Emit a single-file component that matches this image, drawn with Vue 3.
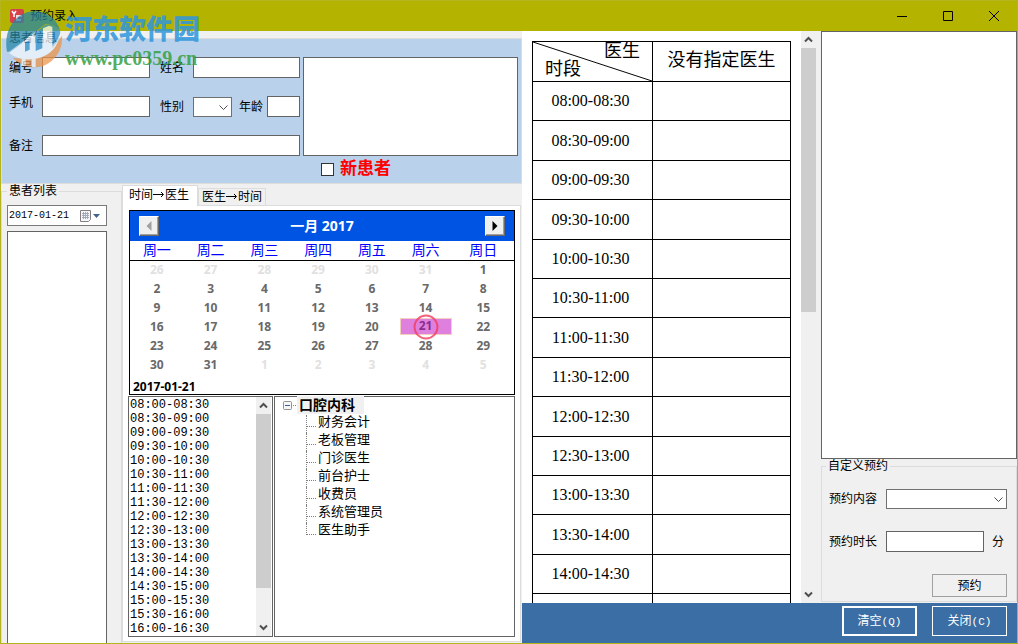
<script setup>
import { ref } from 'vue'

const weekdays = ['周一', '周二', '周三', '周四', '周五', '周六', '周日']
const pad = (n) => String(n).padStart(2, '0')

const weeks = Array.from({ length: 6 }, (_, w) =>
  Array.from({ length: 7 }, (_, d) => {
    const n = w * 7 + d - 5
    if (n < 1) return { day: n + 31, outside: true }
    if (n > 31) return { day: n - 31, outside: true }
    return { day: n, outside: false, selected: n === 21 }
  })
)

const slots = Array.from({ length: 17 }, (_, i) => {
  const start = 480 + i * 30
  const end = start + 30
  return `${pad(Math.floor(start / 60))}:${pad(start % 60)}-${pad(Math.floor(end / 60))}:${pad(end % 60)}`
})
const scheduleSlots = [...slots.slice(0, 13), '']

const staff = ['财务会计', '老板管理', '门诊医生', '前台护士', '收费员', '系统管理员', '医生助手']
const tab = ref('time')
const date = ref('2017-01-21')
</script>

<template>
  <div class="window">
    <header class="titlebar">
      <svg class="app-icon" width="14" height="14" viewBox="0 0 14 14">
        <rect width="14" height="14" rx="2" fill="#d8404a" />
        <path d="M2 2l2 3 2-3M4 5v3" stroke="#fff" stroke-width="1.5" fill="none" />
        <path d="M6 6h6v2H8v2h3v2H6z" fill="#f6d9dc" />
      </svg>
      <h1>预约录入</h1>
      <div class="win-buttons">
        <button aria-label="最小化"><svg width="12" height="12"><path d="M1 6.500h10" /></svg></button>
        <button aria-label="最大化"><svg width="12" height="12"><path d="M1.500 1.500h9v9h-9z" /></svg></button>
        <button aria-label="关闭"><svg width="12" height="12"><path d="M1 1l10 10M11 1L1 11" /></svg></button>
      </div>
    </header>

    <div class="watermark" aria-hidden="true">
      <svg class="mark-logo" width="58" height="60" viewBox="0 0 174 180">
        <path d="M6 128C-4 76 18 26 66 10c44-12 86 10 100 56-14-16-30-22-46-20L72 84 12 128z" fill="#2387a8" />
        <path d="M14 130l54-40 52-42c20-4 36 4 46 20-4 30-40 62-80 72-28 8-54 4-72-10z" fill="#2f92cc" />
        <path d="M171 80c4 40-20 78-58 92-32 8-66-2-90-26 54 10 112-10 148-66z" fill="#ee9447" />
        <path d="M12 132c16-14 34-22 48-38l14-14 18-2v26c10-4 18-12 22-20V58l18-8 10 4v62c8-8 16-18 20-32-6 38-36 60-74 66-30 4-56-2-76-18z" fill="#f6fbff" />
        <path d="M60 100l14-6v28l-14 6zM92 104l20-16v30l-20 8z" fill="#2f92cc" />
        <path d="M56 148v22M86 148v26" stroke="#f8f2ea" stroke-width="12" />
      </svg>
      <div class="mark-text">
        <strong class="mark-name">河东软件园</strong>
        <strong class="mark-url">www.pc0359.cn</strong>
      </div>
    </div>

    <main class="body">
      <section class="left">
        <fieldset class="group patient">
          <legend>患者信息</legend>
          <div class="patient-layout">
            <div class="fields">
              <div class="field-row">
                <label for="no">编号</label><input id="no" type="text" />
                <label class="second" for="name">姓名</label><input id="name" type="text" />
              </div>
              <div class="field-row">
                <label class="raised" for="phone">手机</label><input id="phone" type="text" />
                <label class="second" for="sex">性别</label>
                <div class="sex-age">
                  <div class="combo sex">
                    <select id="sex"><option></option><option>男</option><option>女</option></select>
                    <svg width="9" height="6"><path d="M.5 .5l4 4 4-4" /></svg>
                  </div>
                  <label for="age">年龄</label><input id="age" type="text" />
                </div>
              </div>
              <div class="field-row memo">
                <label for="memo">备注</label><input id="memo" type="text" />
              </div>
            </div>
            <div class="notes">
              <textarea aria-label="患者说明"></textarea>
              <label class="new-patient"><input type="checkbox" />新患者</label>
            </div>
          </div>
        </fieldset>

        <div class="lower">
          <fieldset class="group patients">
            <legend>患者列表</legend>
            <div class="datepicker">
              <input v-model="date" type="text" aria-label="日期" />
              <button aria-label="选择日期">
                <svg width="22" height="14" viewBox="0 0 22 14">
                  <path d="M1.500 1.500h10v9l-2 2h-8z" fill="#f4f6fa" stroke="#85807f" />
                  <path d="M3 4.500h7M3 6.500h7M3 8.500h7M4.500 3v7M6.500 3v7M8.500 3v7" stroke="#a3aab8" fill="none" />
                  <path d="M14 5h7l-3.500 4z" fill="#44618f" />
                </svg>
              </button>
            </div>
            <div class="patient-list" role="listbox" aria-label="患者列表"></div>
          </fieldset>

          <div class="tabs">
            <div class="tab-bar" role="tablist">
              <button role="tab" class="tab" :class="{ active: tab === 'time' }" @click="tab = 'time'">时间<svg width="12" height="12" viewBox="0 0 12 12"><path d="M0 5.500h10M8 3l2.500 2.500L8 8" /></svg>医生</button>
              <button role="tab" class="tab" :class="{ active: tab === 'doctor' }" @click="tab = 'doctor'">医生<svg width="12" height="12" viewBox="0 0 12 12"><path d="M0 5.500h10M8 3l2.500 2.500L8 8" /></svg>时间</button>
            </div>
            <div class="tab-panel">
              <div class="calendar">
                <div class="cal-head">
                  <button aria-label="上个月"><svg width="6" height="10"><path d="M5.500 0v10L.5 5z" fill="#a0a0a0" /></svg></button>
                  <span>一月 2017</span>
                  <button aria-label="下个月"><svg width="6" height="10"><path d="M.5 0v10l5-5z" fill="#000" /></svg></button>
                </div>
                <table class="days">
                  <colgroup><col v-for="d in 6" :key="d" class="day-col" /><col /></colgroup>
                  <thead>
                    <tr><th v-for="d in weekdays" :key="d">{{ d }}</th></tr>
                  </thead>
                  <tbody>
                    <tr v-for="(week, i) in weeks" :key="i">
                      <td v-for="(c, j) in week" :key="j" :class="{ outside: c.outside, selected: c.selected }">
                        <span>{{ c.day }}</span>
                        <svg v-if="c.selected" class="ring" width="26" height="26"><circle cx="13" cy="13" r="11.500" /></svg>
                      </td>
                    </tr>
                  </tbody>
                </table>
                <div class="cal-date">{{ date }}</div>
              </div>

              <div class="pickers">
                <div class="slot-box">
                  <ul class="slots">
                    <li v-for="s in slots" :key="s">{{ s }}</li>
                  </ul>
                  <div class="scrollbar slot-scroll">
                    <svg width="9" height="7"><path d="M1 5.500l3.500-3.500L8 5.500" /></svg>
                    <div class="track"><div class="thumb"></div></div>
                    <svg width="9" height="7"><path d="M1 1.500l3.500 3.500L8 1.500" /></svg>
                  </div>
                </div>
                <div class="tree">
                  <div class="root">
                    <svg width="14" height="9" viewBox="0 0 14 9">
                      <rect x=".5" y=".5" width="8" height="8" rx="1" fill="#f6f6f6" stroke="#919191" />
                      <path d="M2 4.500h5" stroke="#3c5a9a" />
                      <path d="M10 4.500h1M12 4.500h1" stroke="#808080" />
                    </svg>
                    <strong>口腔内科</strong>
                  </div>
                  <ul>
                    <li v-for="s in staff" :key="s">{{ s }}</li>
                  </ul>
                </div>
              </div>
            </div>
          </div>
        </div>
      </section>

      <section class="right">
        <div class="right-main">
          <div class="schedule">
            <div class="sheet">
              <table>
                <colgroup><col class="time-col" /><col /></colgroup>
                <thead>
                  <tr>
                    <th class="corner">
                      <svg preserveAspectRatio="none" viewBox="0 0 120 40"><path d="M0 0L120 40" /></svg>
                      <div class="corner-doctor">医生</div>
                      <div class="corner-time">时段</div>
                    </th>
                    <th>没有指定医生</th>
                  </tr>
                </thead>
                <tbody>
                  <tr v-for="s in scheduleSlots" :key="s"><td>{{ s }}</td><td></td></tr>
                </tbody>
              </table>
            </div>
            <div class="scrollbar sheet-scroll">
              <svg width="9" height="7"><path d="M1 5.500l3.500-3.500L8 5.500" /></svg>
              <div class="track"><div class="thumb"></div></div>
              <svg width="9" height="7"><path d="M1 1.500l3.500 3.500L8 1.500" /></svg>
            </div>
          </div>

          <aside class="side">
            <div class="booking-list" role="listbox" aria-label="预约列表"></div>
            <fieldset class="group custom">
              <legend>自定义预约</legend>
              <div class="custom-row">
                <label for="content">预约内容</label>
                <div class="combo content">
                  <select id="content"><option></option></select>
                  <svg width="9" height="6"><path d="M.5 .5l4 4 4-4" /></svg>
                </div>
              </div>
              <div class="custom-row">
                <label for="length">预约时长</label>
                <input id="length" type="text" /><span class="unit">分</span>
              </div>
              <button class="book">预约</button>
            </fieldset>
          </aside>
        </div>
        <footer>
          <button class="primary">清空<span>(Q)</span></button>
          <button>关闭<span>(C)</span></button>
        </footer>
      </section>
    </main>
  </div>
</template>

<style>
body {
  margin: 0;
}
</style>

<style scoped>
* {
  box-sizing: border-box;
}
.window {
  position: relative;
  display: flex;
  flex-direction: column;
  height: 100vh;
  overflow: hidden;
  border: 1px solid #b4b41e;
  background: #f0f0f0;
  color: #000;
  font: 12px/14px "Liberation Sans", "Noto Sans CJK SC", sans-serif;
}
button,
input,
select,
textarea {
  margin: 0;
  padding: 0;
  border-radius: 0;
  font: inherit;
  color: inherit;
}
ul {
  margin: 0;
  padding: 0;
  list-style: none;
}
svg {
  flex: none;
  display: block;
}

/* Title bar */
.titlebar {
  display: flex;
  align-items: center;
  flex: none;
  height: 30px;
  padding-left: 9px;
  background: #b4b400;
}
h1 {
  flex: 1;
  margin: 0 0 0 6px;
  font-size: 12px;
  font-weight: 400;
}
.win-buttons {
  display: flex;
}
.win-buttons button {
  display: flex;
  align-items: center;
  justify-content: center;
  width: 46px;
  height: 30px;
  border: 0;
  background: none;
}
.win-buttons path {
  fill: none;
  stroke: #000;
}

/* Watermark over the window's corner */
.watermark {
  position: absolute;
  top: 8px;
  left: 4px;
  z-index: 2;
  display: flex;
  gap: 2px;
  pointer-events: none;
  opacity: 0.85;
}
.mark-logo {
  opacity: 0.85;
}
.mark-text {
  display: flex;
  flex-direction: column;
}
.mark-name {
  font-size: 27px;
  font-weight: 900;
  line-height: 42px;
  color: #2f96dd;
}
.mark-url {
  font: 700 20px/14px "Liberation Serif", serif;
  color: #36a044;
}

/* Frame */
.body {
  display: grid;
  grid-template-columns: minmax(0, 521fr) minmax(0, 495fr);
  flex: 1;
  min-height: 0;
}
.left,
.right {
  display: flex;
  flex-direction: column;
  min-height: 0;
}
.group {
  min-width: 0;
  margin: 0;
  border: 1px solid #dcdcdc;
}
legend {
  padding: 0 2px;
  line-height: 14px;
}
.combo {
  position: relative;
  display: flex;
}
.combo select {
  width: 100%;
  height: 20px;
  border: 1px solid #707070;
  background: #fff;
  appearance: none;
}
.combo svg {
  position: absolute;
  top: 8px;
  right: 4px;
  pointer-events: none;
}
.combo path {
  fill: none;
  stroke: #505050;
}
input[type="text"],
textarea {
  min-width: 0;
  width: 100%;
  height: 21px;
  border: 1px solid #646464;
  background: #fff;
}

/* Patient details */
.patient {
  flex: none;
  padding: 12px 3px 4px 7px;
  background: #b9d1ea;
}
.patient legend {
  margin-left: -2px;
}
.patient-layout {
  display: grid;
  grid-template-columns: minmax(0, 291fr) minmax(0, 215fr);
  column-gap: 3px;
}
.fields {
  display: flex;
  flex-direction: column;
  gap: 18px;
}
.field-row {
  display: grid;
  grid-template-columns: 33px minmax(0, 108fr) 43px minmax(0, 107fr);
  align-items: center;
}
.field-row.memo {
  grid-template-columns: 33px minmax(0, 1fr);
}
.second {
  padding-left: 10px;
}
.raised {
  align-self: start;
}
.sex-age {
  display: flex;
  align-items: center;
}
.sex {
  flex: none;
  width: 39px;
  margin-right: 7px;
}
.sex-age label {
  flex: none;
  width: 28px;
}
.notes {
  display: flex;
  flex-direction: column;
}
.notes textarea {
  display: block;
  height: 99px;
  resize: none;
}
.new-patient {
  display: flex;
  align-items: center;
  gap: 6px;
  margin: 3px 0 0 18px;
  font-size: 17px;
  line-height: 20px;
  font-weight: 700;
  color: #f00;
}
.new-patient input {
  width: 13px;
  height: 13px;
  border: 1px solid #333;
  background: #fff;
  appearance: none;
}
.new-patient input:checked {
  box-shadow: inset 0 0 0 2px #fff;
  background: #333;
}

/* Patient list */
.lower {
  display: grid;
  grid-template-columns: minmax(0, 121fr) minmax(0, 400fr);
  flex: 1;
  min-height: 0;
}
.patients {
  height: 100%;
  min-height: 0;
  padding: 7px 14px 0 5px;
  border-bottom: 0;
  overflow: hidden;
}
.datepicker {
  display: flex;
  align-items: center;
  height: 21px;
  border: 1px solid #7a7a7a;
  background: #fff;
}
.datepicker input {
  flex: 1;
  height: 19px;
  padding-left: 1px;
  border: 0;
  font: 10px/14px "Liberation Mono", monospace;
}
.datepicker button {
  margin-right: 5px;
  border: 0;
  background: none;
}
.patient-list {
  height: 100vh;
  margin-top: 5px;
  border: 1px solid #646464;
  background: #fff;
}

/* Tabs */
.tabs {
  display: flex;
  flex-direction: column;
  min-height: 0;
  padding: 1px 1px 1px 0;
}
.tab-bar {
  display: flex;
  align-items: flex-end;
  flex: none;
  height: 20px;
}
.tab {
  display: flex;
  align-items: center;
  height: 17px;
  padding: 0 3px;
  border: 1px solid #dcdcdc;
  border-bottom: 0;
  background: #f0f0f0;
}
.tab.active {
  position: relative;
  height: 21px;
  margin-bottom: -1px;
  padding: 0 8px 2px 6px;
  background: #fff;
}
.tab path {
  fill: none;
  stroke: #000;
}
.tab-panel {
  display: flex;
  flex-direction: column;
  flex: 1;
  min-height: 0;
  padding: 4px 5px 4px 5px;
  border: 1px solid #dcdcdc;
  background: #fff;
}

/* Calendar */
.calendar {
  flex: none;
  margin-left: 1px;
  border: 1px solid #000;
  font-family: "Noto Sans", "Noto Sans CJK SC", sans-serif;
}
.cal-head {
  display: flex;
  align-items: center;
  justify-content: space-between;
  height: 30px;
  padding: 0 9px;
  background: #0054e3;
  color: #fff;
  font-size: 14px;
  font-weight: 700;
}
.cal-head button {
  display: flex;
  align-items: center;
  justify-content: center;
  width: 20px;
  height: 20px;
  border: 1px solid;
  border-color: #fff #696969 #696969 #fff;
  background: #f0f0f0;
  box-shadow: inset -1px -1px #a0a0a0;
}
.days {
  width: 100%;
  table-layout: fixed;
  border-collapse: collapse;
  text-align: center;
}
.day-col {
  width: 14%;
}
.days th {
  height: 19px;
  padding: 0;
  border-bottom: 1px solid #000;
  font-size: 14px;
  font-weight: 400;
  line-height: 18px;
  color: #00f;
}
.days td {
  position: relative;
  height: 19px;
  padding: 0;
  font-weight: 700;
  line-height: 17px;
  color: #696969;
}
.days .outside {
  color: #e1e1e1;
}
.selected span {
  display: block;
  height: 17px;
  margin: 0 1px;
  border: 1px solid #f3cfc0;
  background: #df80df;
  line-height: 13px;
  color: #8b2c8f;
}
.ring {
  position: absolute;
  top: -3px;
  left: calc(50% - 13px);
}
.ring circle {
  fill: none;
  stroke: #f03c5c;
  stroke-width: 2;
  opacity: 0.8;
}
.cal-date {
  padding: 6px 3px 0;
  font-weight: 700;
}

/* Time slots and staff tree */
.pickers {
  display: grid;
  grid-template-columns: minmax(0, 145fr) minmax(0, 241fr);
  column-gap: 1px;
  flex: 1;
  min-height: 0;
  margin-top: 1px;
}
.slot-box {
  display: flex;
  min-height: 0;
  border: 1px solid #646464;
  overflow: hidden;
}
.slots {
  flex: 1;
  padding: 1px 0 0 1px;
  font: 12px/14px "Liberation Mono", monospace;
  white-space: nowrap;
}
.scrollbar {
  display: flex;
  flex-direction: column;
  align-items: center;
  flex: none;
  width: 15px;
  padding: 5px 0;
  background: #f0f0f0;
}
.scrollbar path {
  fill: none;
  stroke: #505050;
  stroke-width: 2;
}
.track {
  flex: 1;
  width: 100%;
  margin: 5px 0;
}
.thumb {
  height: 85%;
  background: #cdcdcd;
}
.slot-scroll {
  margin-right: 1px;
}
.tree {
  padding-left: 8px;
  border: 1px solid #646464;
  font-size: 13px;
}
.root {
  display: flex;
  align-items: center;
  height: 16px;
}
.root strong {
  padding: 0 9px 0 2px;
  background: #f0f0f0;
  font-size: 14px;
  line-height: 18px;
}
.tree ul {
  margin-left: 23px;
}
.tree li {
  position: relative;
  padding-left: 12px;
  line-height: 18px;
}
.tree li::before {
  content: "";
  position: absolute;
  top: 2px;
  left: 0;
  width: 9px;
  height: 11px;
  border-left: 1px dotted #808080;
  border-bottom: 1px dotted #808080;
}
.tree li:not(:last-child)::after {
  content: "";
  position: absolute;
  top: 13px;
  left: 0;
  height: 7px;
  border-left: 1px dotted #808080;
}

/* Schedule */
.right-main {
  display: grid;
  grid-template-columns: minmax(0, 299fr) minmax(0, 196fr);
  flex: 1;
  min-height: 0;
}
.schedule {
  display: flex;
  min-height: 0;
  padding-right: 5px;
}
.sheet {
  flex: 1;
  padding: 10px 10px 0;
  background: #fff;
  overflow: hidden;
}
.sheet table {
  width: 100%;
  table-layout: fixed;
  border-collapse: collapse;
  font: 16px/20px "Liberation Serif", "Noto Sans CJK SC", serif;
  text-align: center;
}
.time-col {
  width: 120px;
}
.sheet th,
.sheet td {
  height: 39px;
  padding: 0;
  border: 1px solid #000;
}
.sheet td {
  padding-right: 4px;
}
.sheet tbody tr:nth-child(5n + 2) td,
.sheet tbody tr:nth-child(5n + 4) td {
  height: 40px;
}
.sheet th {
  height: 40px;
  padding-bottom: 4px;
  font-size: 18px;
  font-weight: 400;
}
.sheet .corner {
  position: relative;
  padding: 0 12px 3px;
  line-height: 18px;
}
.corner svg {
  position: absolute;
  inset: 0;
  width: 100%;
  height: 100%;
}
.corner path {
  stroke: #000;
}
.corner-doctor {
  text-align: right;
}
.corner-time {
  text-align: left;
}
.sheet-scroll .thumb {
  height: 49%;
}

/* Custom booking */
.side {
  display: flex;
  flex-direction: column;
  min-height: 0;
}
.booking-list {
  flex: 1;
  border: 1px solid #646464;
  background: #fff;
}
.custom {
  display: flex;
  flex-direction: column;
  margin-bottom: 1px;
  padding: 16px 9px 4px 7px;
}
.custom legend {
  margin-left: -3px;
}
.custom-row {
  display: flex;
  align-items: center;
  margin-bottom: 22px;
}
.custom-row label {
  flex: none;
  width: 57px;
}
.content {
  flex: 1;
}
.custom-row input {
  flex: 1;
}
.unit {
  flex: none;
  width: 23px;
  padding-left: 8px;
}
.book {
  display: block;
  width: 75px;
  height: 23px;
  margin-left: auto;
  border: 1px solid #a0a0a0;
  background: #f0f0f0;
}

footer {
  display: flex;
  justify-content: flex-end;
  gap: 15px;
  flex: none;
  height: 40px;
  padding: 3px 10px 7px;
  background: #3a6ea5;
}
footer button {
  width: 75px;
  border: 1px solid #fff;
  background: #3a6ea5;
  color: #fff;
}
footer .primary {
  border-width: 2px;
}
footer span {
  font-family: "Liberation Mono", monospace;
  font-size: 11px;
}
</style>
